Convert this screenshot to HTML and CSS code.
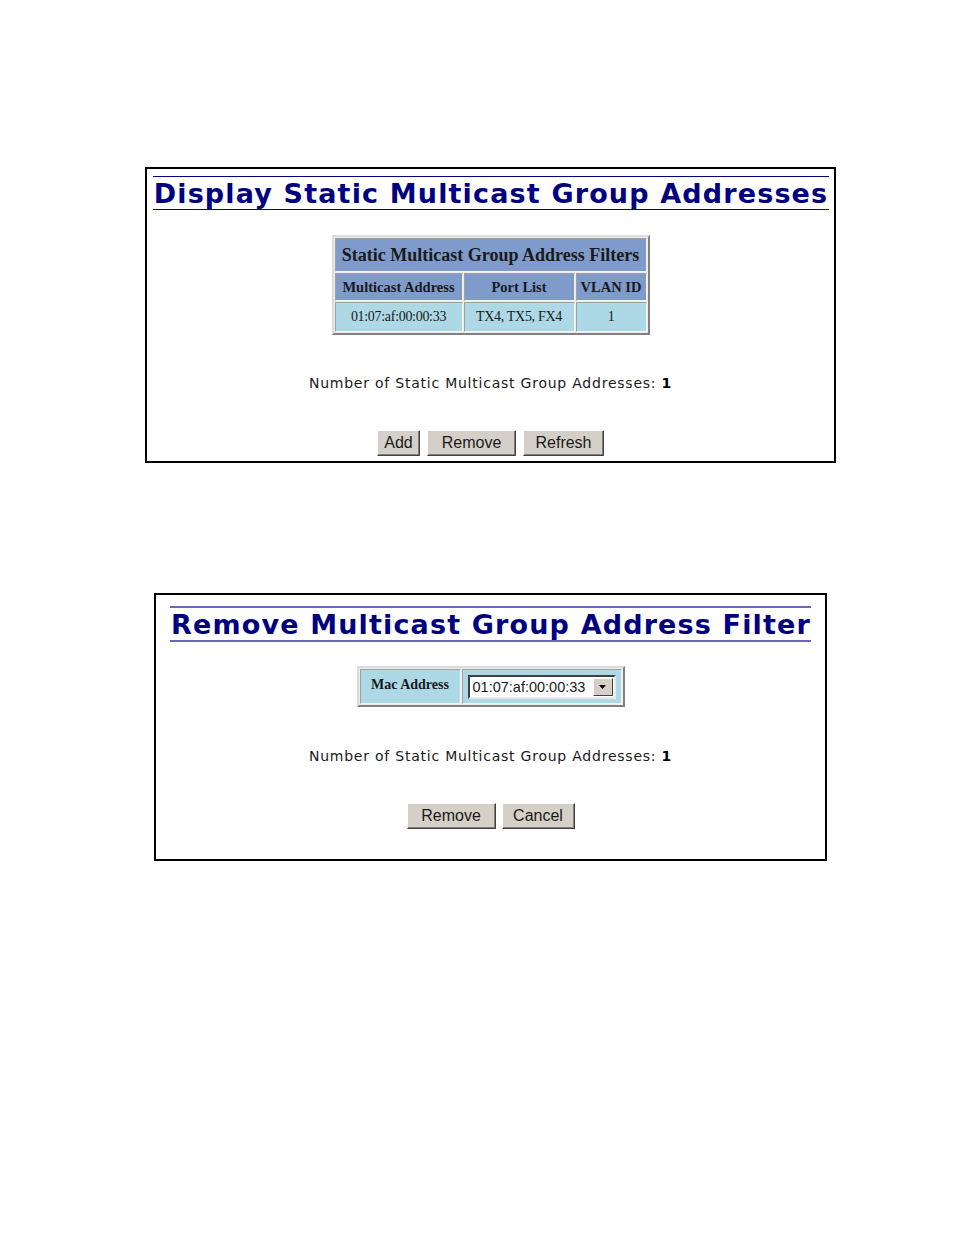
FILE: index.html
```html
<!DOCTYPE html>
<html>
<head>
<meta charset="utf-8">
<link rel="stylesheet" href="styles.css">
</head>
<body>
<div class="page">
  <div class="frame frame-display">
    <h1 class="title title-display">Display Static Multicast Group Addresses</h1>
    <table class="grid filters">
      <tr><th colspan="3" class="cap">Static Multicast Group Address Filters</th></tr>
      <tr>
        <th class="col c1">Multicast Address</th>
        <th class="col c2">Port List</th>
        <th class="col c3">VLAN ID</th>
      </tr>
      <tr>
        <td class="data">01:07:af:00:00:33</td>
        <td class="data">TX4, TX5, FX4</td>
        <td class="data">1</td>
      </tr>
    </table>
    <p class="count count-display">Number of Static Multicast Group Addresses: <b>1</b></p>
    <div class="buttons buttons-display">
      <button class="btn b-add">Add</button>
      <button class="btn b-remove">Remove</button>
      <button class="btn b-refresh">Refresh</button>
    </div>
  </div>

  <div class="frame frame-remove">
    <h1 class="title title-remove">Remove Multicast Group Address Filter</h1>
    <table class="grid mac">
      <tr>
        <th class="maclabel">Mac Address</th>
        <td class="maccell">
          <div class="select">
            <span class="select-text">01:07:af:00:00:33</span>
            <span class="select-arrow"><svg width="7" height="4" viewBox="0 0 7 4"><path d="M0 0h7L3.5 4z" fill="#000"/></svg></span>
          </div>
        </td>
      </tr>
    </table>
    <p class="count count-remove">Number of Static Multicast Group Addresses: <b>1</b></p>
    <div class="buttons buttons-remove">
      <button class="btn b-remove">Remove</button>
      <button class="btn b-cancel">Cancel</button>
    </div>
  </div>
</div>
</body>
</html>
```

FILE: styles.css
```css
html, body {
  margin: 0;
  padding: 0;
  background: #ffffff;
}
.page {
  width: 954px;
  height: 1235px;
  padding-top: 167px;
  box-sizing: border-box;
  display: flex;
  flex-direction: column;
}
.frame {
  border: 2px solid #000;
  box-sizing: border-box;
  display: flex;
  flex-direction: column;
  align-items: center;
}
.frame-display {
  margin-left: 145px;
  width: 691px;
  height: 296px;
}
.frame-remove {
  margin-left: 154px;
  margin-top: 130px;
  width: 673px;
  height: 268px;
}
.title {
  margin: 0;
  font-family: "DejaVu Sans", Verdana, sans-serif;
  font-weight: bold;
  font-size: 27px;
  letter-spacing: 1.15px;
  text-indent: 1px;
  line-height: 32px;
  color: #000080;
  text-align: center;
  white-space: nowrap;
  box-sizing: border-box;
}
.title-display {
  margin-top: 7px;
  width: 676px;
  border-top: 1px solid #000080;
  border-bottom: 1px solid #000080;
  height: 34px;
  padding-top: 1px;
}
.title-remove {
  margin-top: 11px;
  width: 641px;
  border-top: 2px solid #6a6ab8;
  border-bottom: 2px solid #6a6ab8;
  height: 36px;
  padding-top: 1px;
}
.grid {
  border-collapse: separate;
  border-spacing: 1px;
  border: 2px solid;
  border-color: #dcdcdc #808080 #808080 #dcdcdc;
  background: #ececec;
}
.grid th, .grid td {
  border: 1px solid;
  border-color: #a0a0a0 #f4f4f4 #f4f4f4 #a0a0a0;
  padding: 0;
  font-family: "Liberation Serif", "Times New Roman", serif;
  color: #1a1a1a;
  text-align: center;
  white-space: nowrap;
}
.filters {
  margin-top: 25px;
  width: 318px;
}
.cap {
  background: #7f9bcc;
  font-size: 18px;
  font-weight: bold;
  height: 32px;
}
.col {
  background: #7f9bcc;
  font-size: 14.5px;
  font-weight: bold;
  height: 26px;
}
.c1 { width: 126px; }
.c2 { width: 109px; }
.c3 { width: 69px; }
.data {
  background: #add8e6;
  font-size: 14px;
  height: 28px;
  letter-spacing: -0.3px;
}
.count {
  margin: 0;
  font-family: "DejaVu Sans", Verdana, sans-serif;
  font-size: 14px;
  letter-spacing: 0.77px;
  line-height: 16px;
  color: #1a1a1a;
  white-space: nowrap;
}
.count b { color: #000; }
.count-display { margin-top: 40px; }
.count-remove { margin-top: 41px; }
.buttons {
  display: flex;
  gap: 7px;
}
.buttons-display { margin-top: 39px; }
.buttons-remove { margin-top: 39px; gap: 6px; }
.btn {
  margin: 0;
  height: 26px;
  padding: 0;
  font-family: "Liberation Sans", Arial, sans-serif;
  font-size: 16px;
  color: #1a1a1a;
  background: #d4d0c8;
  border: 1px solid;
  border-color: #ffffff #404040 #404040 #ffffff;
  box-shadow: inset -1px -1px 0 #808080;
  box-sizing: border-box;
}
.b-add { width: 43px; }
.b-remove { width: 89px; }
.b-refresh { width: 81px; }
.b-cancel { width: 73px; }
.mac {
  margin-top: 24px;
  width: 268px;
}
.maclabel {
  background: #add8e6;
  font-size: 14px;
  font-weight: bold;
  width: 101px;
  height: 35px;
  vertical-align: top;
  padding-top: 7px !important;
  box-sizing: border-box;
}
.maccell {
  background: #add8e6;
  text-align: left !important;
  padding-left: 5px !important;
}
.select {
  display: flex;
  align-items: center;
  width: 148px;
  height: 24px;
  box-sizing: border-box;
  background: #fff;
  border: 2px solid;
  border-color: #404040 #e8e8e8 #e8e8e8 #404040;
  padding: 0 1px 0 3px;
}
.select-text {
  flex: 1;
  font-family: "Liberation Sans", Arial, sans-serif;
  font-size: 14.5px;
  color: #1a1a1a;
}
.select-arrow {
  width: 20px;
  height: 18px;
  box-sizing: border-box;
  background: #d4d0c8;
  border: 1px solid;
  border-color: #ffffff #404040 #404040 #ffffff;
  display: flex;
  align-items: center;
  justify-content: center;
}
```
